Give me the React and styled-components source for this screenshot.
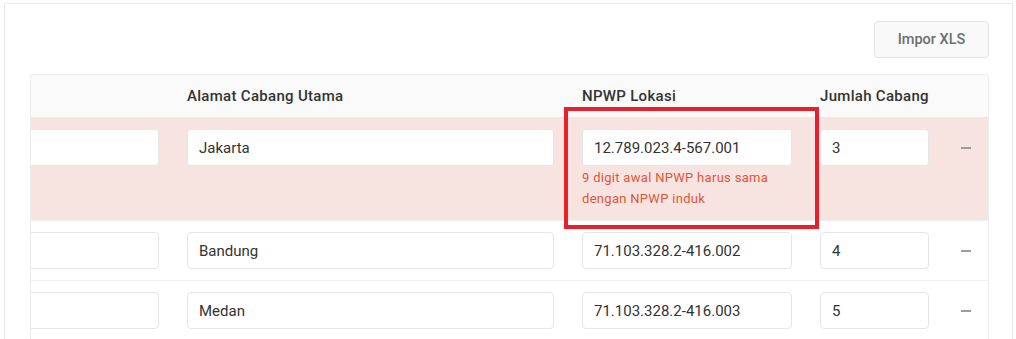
import React, { useLayoutEffect, useRef } from "react";
import styled, { createGlobalStyle } from "styled-components";

const Global = createGlobalStyle`
  html, body { margin: 0; padding: 0; background: #ffffff; }
  body { font-family: Roboto, "Noto Sans", Arial, sans-serif; color: #333; }
  * { box-sizing: border-box; }
`;

const Page = styled.div`
  padding: 3px 3px 0 4px;
`;

const Card = styled.section`
  border: 1px solid #ebebeb;
  border-bottom: none;
  padding: 17px 23px 0 25px;
  min-height: 336px;
  background: #fff;
`;

const Toolbar = styled.div`
  display: flex;
  justify-content: flex-end;
  margin-bottom: 16px;
`;

const Button = styled.button`
  height: 37px;
  width: 115px;
  border: 1px solid #e4e4e4;
  border-radius: 4px;
  background: #f9f9f9;
  color: #6e6e6e;
  font-family: Roboto, Arial, sans-serif;
  font-size: 14.5px;
  font-weight: 500;
  cursor: pointer;
`;

const TableWrap = styled.div`
  position: relative;
`;

const Scroller = styled.div`
  border: 1px solid #ececec;
  border-bottom: none;
  border-radius: 4px 4px 0 0;
  overflow: hidden;
`;

const COLS = "248px 395px 238px 137px 45px";

const Grid = styled.div`
  width: 1063px;
`;

const HeadRow = styled.div`
  display: grid;
  grid-template-columns: ${COLS};
  height: 42px;
  align-items: center;
  background: #fafafa;
`;

const HeadCell = styled.div`
  padding: 0 14px;
  font-size: 15px;
  letter-spacing: 0.3px;
  font-weight: 500;
  color: #333;
`;

const Row = styled.div`
  display: grid;
  grid-template-columns: ${COLS};
  align-items: start;
  background: ${(p) => (p.$error ? "#f7e4e0" : "#fff")};
  border-bottom: 1px solid #eeeeee;
  padding: ${(p) => (p.$error ? "12px 0 11px" : "11px 0")};
`;

const Cell = styled.div`
  padding: 0 14px;
  display: flex;
  flex-direction: column;
`;

const Input = styled.input`
  width: 100%;
  height: 37px;
  border: 1px solid #e6e6e6;
  border-radius: 4px;
  background: #fff;
  padding: 0 11px;
  font-family: Roboto, Arial, sans-serif;
  font-size: 15px;
  color: #333;
  outline: none;
`;

const ErrorText = styled.div`
  margin-top: 1px;
  font-size: 13px;
  line-height: 21px;
  letter-spacing: 0.3px;
  color: #e0563b;
`;

const RemoveCell = styled.div`
  height: 37px;
  display: flex;
  align-items: center;
  justify-content: center;
`;

const RemoveBtn = styled.button`
  border: none;
  background: transparent;
  padding: 6px 2px;
  cursor: pointer;
  display: flex;
  span {
    display: block;
    width: 10px;
    height: 2px;
    background: #9c9c9c;
  }
`;

const Highlight = styled.div`
  position: absolute;
  left: 534px;
  top: 33px;
  width: 255px;
  height: 122px;
  border: 4px solid #e8202a;
  pointer-events: none;
`;

const rows = [
  { addr: "Jakarta", npwp: "12.789.023.4-567.001", count: "3", error: "9 digit awal NPWP harus sama dengan NPWP induk" },
  { addr: "Bandung", npwp: "71.103.328.2-416.002", count: "4" },
  { addr: "Medan", npwp: "71.103.328.2-416.003", count: "5" },
];

export default function App() {
  const ref = useRef(null);
  useLayoutEffect(() => {
    if (ref.current) ref.current.scrollLeft = 106;
  }, []);
  return (
    <Page>
      <Global />
      <Card>
        <Toolbar>
          <Button>Impor XLS</Button>
        </Toolbar>
        <TableWrap>
          <Scroller ref={ref}>
            <Grid>
              <HeadRow>
                <HeadCell />
                <HeadCell>Alamat Cabang Utama</HeadCell>
                <HeadCell>NPWP Lokasi</HeadCell>
                <HeadCell>Jumlah Cabang</HeadCell>
                <HeadCell />
              </HeadRow>
              {rows.map((r, i) => (
                <Row key={i} $error={!!r.error}>
                  <Cell><Input defaultValue="" aria-label="Nama Cabang" /></Cell>
                  <Cell><Input defaultValue={r.addr} /></Cell>
                  <Cell>
                    <Input defaultValue={r.npwp} />
                    {r.error && <ErrorText>{r.error}</ErrorText>}
                  </Cell>
                  <Cell><Input defaultValue={r.count} /></Cell>
                  <RemoveCell>
                    <RemoveBtn aria-label="Hapus"><span /></RemoveBtn>
                  </RemoveCell>
                </Row>
              ))}
            </Grid>
          </Scroller>
          <Highlight />
        </TableWrap>
      </Card>
    </Page>
  );
}
